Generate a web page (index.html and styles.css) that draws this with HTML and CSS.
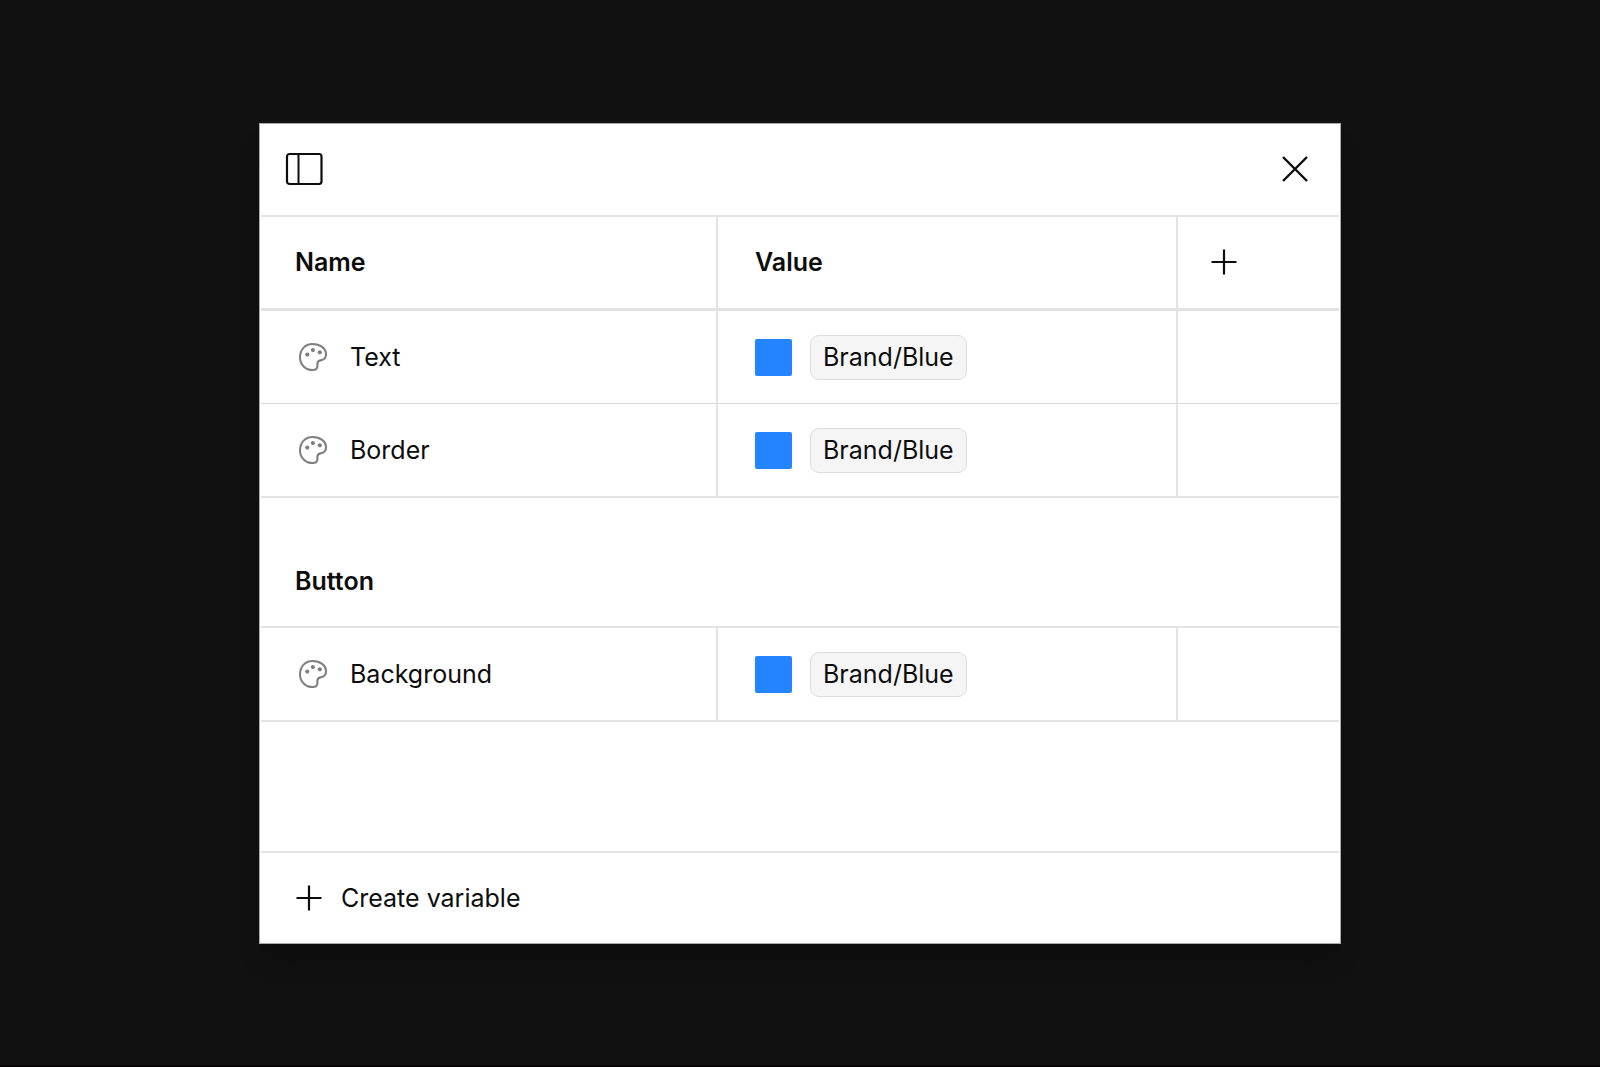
FILE: index.html
```html
<!DOCTYPE html>
<html lang="en">
  <head>
    <meta charset="UTF-8" />
    <meta name="viewport" content="width=device-width, initial-scale=1.0" />
    <title>Variables</title>
    <link rel="stylesheet" href="styles.css">
  </head>
  <body>
    <!-- shared icons -->
    <svg class="sprite" aria-hidden="true">
      <symbol id="icon-plus" viewBox="0 0 28 28">
        <path d="M14 1.5v25M1.5 14h25" fill="none" stroke="currentColor" stroke-width="2.2" />
      </symbol>
      <symbol id="icon-palette" viewBox="1 0 36 36">
        <path
          d="M18.5 5C11 5 6 10.9 6 18.2C6 25.7 11.6 31 18.8 31C21.8 31 23.4 29.6 23.4 27V25C23.4 22.8 24.4 21.7 26.6 21.4C30 20.9 32 18.8 32 15.3C32 9.3 26.3 5 18.5 5Z"
          fill="none" stroke="currentColor" stroke-width="2.1" />
        <circle cx="13.3" cy="15.6" r="2.1" fill="currentColor" />
        <circle cx="18.9" cy="11.1" r="2.1" fill="currentColor" />
        <circle cx="25.8" cy="13.3" r="2.1" fill="currentColor" />
      </symbol>
    </svg>

    <main class="panel">
      <header class="panel-header">
        <button type="button" aria-label="Toggle sidebar">
          <svg width="38" height="34" viewBox="0 0 38 34">
            <rect x="2" y="2" width="34.5" height="30" rx="2.5" fill="none" stroke="currentColor" stroke-width="2.2" />
            <path d="M13.5 2v30" stroke="currentColor" stroke-width="2" />
          </svg>
        </button>
        <button type="button" aria-label="Close">
          <svg width="28" height="28" viewBox="0 0 28 28">
            <path d="M2 2l24 24M26 2L2 26" stroke="currentColor" stroke-width="2.4" />
          </svg>
        </button>
      </header>

      <table class="variables">
        <colgroup>
          <col class="col-name">
          <col class="col-value">
          <col class="col-add">
        </colgroup>
        <thead>
          <tr>
            <th scope="col">Name</th>
            <th scope="col" class="value">Value</th>
            <td class="add">
              <button type="button" aria-label="Add mode">
                <svg width="28" height="28"><use href="#icon-plus" /></svg>
              </button>
            </td>
          </tr>
        </thead>
        <tbody>
          <tr>
            <td>
              <div class="cell">
                <svg class="palette" width="36" height="36"><use href="#icon-palette" /></svg>
                Text
              </div>
            </td>
            <td class="value">
              <div class="cell"><span class="swatch"></span><span class="chip">Brand/Blue</span></div>
            </td>
            <td></td>
          </tr>
          <tr>
            <td>
              <div class="cell">
                <svg class="palette" width="36" height="36"><use href="#icon-palette" /></svg>
                Border
              </div>
            </td>
            <td class="value">
              <div class="cell"><span class="swatch"></span><span class="chip">Brand/Blue</span></div>
            </td>
            <td></td>
          </tr>
        </tbody>
        <tbody>
          <tr class="group">
            <th scope="rowgroup" colspan="3">Button</th>
          </tr>
          <tr>
            <td>
              <div class="cell">
                <svg class="palette" width="36" height="36"><use href="#icon-palette" /></svg>
                Background
              </div>
            </td>
            <td class="value">
              <div class="cell"><span class="swatch"></span><span class="chip">Brand/Blue</span></div>
            </td>
            <td></td>
          </tr>
        </tbody>
      </table>

      <footer class="panel-footer">
        <button class="create-button" type="button">
          <svg width="28" height="28"><use href="#icon-plus" /></svg>
          Create variable
        </button>
      </footer>
    </main>
  </body>
</html>
```
FILE: styles.css
```css
* {
  box-sizing: border-box;
}
body {
  margin: 0;
  min-height: 100vh;
  display: flex;
  align-items: center;
  justify-content: center;
  background-color: #111;
  box-shadow: inset 0 -2px #080305;
  color: #0d0d0d;
  font-family: Inter, "Liberation Sans", sans-serif;
  font-size: 25px;
  line-height: 30px;
}
svg {
  display: block;
  flex: none;
}
.sprite {
  position: absolute;
  width: 0;
  height: 0;
}
button {
  display: block;
  border: none;
  background: none;
  padding: 0;
  color: inherit;
  font: inherit;
  cursor: pointer;
}
.panel {
  width: 100%;
  max-width: 1082px;
  padding: 1px;
  border: 1px solid #aaa;
  background-color: #fff;
  box-shadow: 0 20px 24px -8px rgba(0, 0, 0, 0.35);
}
.panel-header {
  display: flex;
  align-items: center;
  justify-content: space-between;
  height: 92px;
  padding: 0 30px 2px 24px;
  border-bottom: 2px solid #e3e3e3;
}
.variables {
  width: 100%;
  table-layout: fixed;
  border-collapse: separate;
  border-spacing: 0;
}
.col-name {
  width: 457px;
}
.col-add {
  width: 161px;
}
th,
td {
  height: 93px;
  padding: 0 34px;
  border-right: 2px solid #e3e3e3;
  border-bottom: 1px solid #d8d8d8;
  text-align: left;
  font-weight: 400;
}
th {
  font-weight: 600;
}
th:last-child,
td:last-child {
  border-right: none;
}
thead th,
thead td {
  height: 94px;
  padding-bottom: 2px;
  border-bottom: 3px solid #e3e3e3;
}
tbody tr:last-child td {
  height: 94px;
  border-bottom: 2px solid #e3e3e3;
}
.value {
  padding-left: 37px;
}
.add {
  padding-left: 32px;
}
.group th {
  height: 130px;
  padding-bottom: 30px;
  border-bottom: 2px solid #e3e3e3;
  vertical-align: bottom;
}
.cell {
  display: flex;
  align-items: center;
  gap: 19px;
}
.value .cell {
  gap: 18px;
}
.palette {
  color: #808080;
}
.swatch {
  width: 37px;
  height: 37px;
  border-radius: 2px;
  background-color: #2483ff;
}
.chip {
  padding: 6px 12px 7px;
  border: 1px solid #dcdcdc;
  border-radius: 9px;
  background-color: #f5f5f5;
}
.panel-footer {
  margin-top: 129px;
  padding: 0 34px;
  border-top: 2px solid #e3e3e3;
}
.create-button {
  display: flex;
  align-items: center;
  gap: 18px;
  height: 89px;
}
```
